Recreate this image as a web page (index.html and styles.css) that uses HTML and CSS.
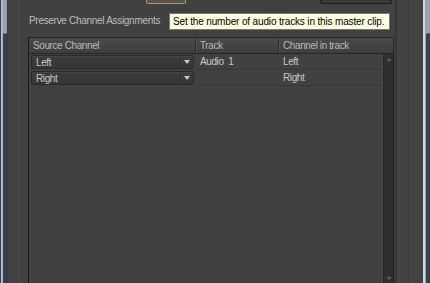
FILE: index.html
```html
<!DOCTYPE html>
<html lang="en">
<head>
    <meta charset="UTF-8">
    <title>Master Clip Channels</title>
    <link rel="stylesheet" href="styles.css">
</head>
<body>
    <div class="window">
        <div class="edge edge-left"></div>
        <div class="gutter gutter-left"></div>

        <div class="panel">
            <div class="top-buttons">
                <div class="btn btn-focus"></div>
                <div class="btn btn-dark"></div>
            </div>

            <div class="label-row">
                <span class="label">Preserve Channel Assignments</span>
                <div class="tooltip">Set the number of audio tracks in this master clip.</div>
            </div>

            <div class="grid">
                <div class="grid-head">
                    <div class="th col-src">Source Channel</div>
                    <div class="th col-track">Track</div>
                    <div class="th col-chan">Channel in track</div>
                </div>
                <div class="grid-body">
                    <div class="rows">
                        <div class="row">
                            <div class="cell col-src">
                                <div class="select"><span>Left</span><span class="arrow"></span></div>
                            </div>
                            <div class="cell col-track">Audio&nbsp; 1</div>
                            <div class="cell col-chan">Left</div>
                        </div>
                        <div class="row">
                            <div class="cell col-src">
                                <div class="select"><span>Right</span><span class="arrow"></span></div>
                            </div>
                            <div class="cell col-track"></div>
                            <div class="cell col-chan">Right</div>
                        </div>
                    </div>
                    <div class="scrollbar">
                        <span class="sb-up"></span>
                        <span class="sb-down"></span>
                    </div>
                </div>
            </div>
        </div>

        <div class="gutter gutter-right"></div>
        <div class="edge edge-right"></div>
    </div>
</body>
</html>
```

FILE: styles.css
```css
* {
    box-sizing: border-box;
    margin: 0;
    padding: 0;
}

body {
    background: #404040;
    font-family: 'Liberation Sans', Arial, sans-serif;
    font-size: 10px;
    color: #c4c4c4;
    overflow: hidden;
}

.window {
    display: flex;
    width: 430px;
    height: 283px;
}

/* outer frame strips */
.edge {
    width: 7px;
    background: linear-gradient(to bottom, #9aa2ab 0, #9aa2ab 33px, #37404c 34px, #37404c 100%);
}

.edge-left {
    border-left: 1px solid #3a3f46;
    box-shadow: inset 1px 0 0 #b6c0cb, inset 2px 0 0 #aab4bf;
}

.edge-right {
    box-shadow: inset 2px 0 0 #d0d6dc, inset 3px 0 0 #98a2ac;
}

.gutter-left {
    width: 13px;
    background: #434343;
    border-left: 1px solid #383838;
    border-right: 1px solid #4b4b4b;
}

.gutter-right {
    width: 28px;
    background: #434343;
    border-left: 2px solid #363636;
    box-shadow: inset -14px 0 0 #434343, inset -15px 0 0 #3b3b3b;
}

.panel {
    width: 375px;
    background: #414141;
    padding-left: 8px;
    display: flex;
    flex-direction: column;
}

/* buttons cut off at the top */
.top-buttons {
    display: flex;
    height: 4px;
}

.btn {
    height: 4px;
    border-radius: 0 0 2px 2px;
}

.btn-focus {
    margin-left: 118px;
    width: 40px;
    background: #5a5448;
    border: 1px solid #a8977a;
    border-top: none;
}

.btn-dark {
    margin-left: 134px;
    width: 72px;
    background: #383838;
    border: 1px solid #1e1e1e;
    border-top: none;
}

.label-row {
    position: relative;
    height: 33px;
    padding-top: 11px;
    padding-left: 1px;
}

.label {
    color: #bdbdbd;
    letter-spacing: -0.3px;
}

.tooltip {
    position: absolute;
    left: 141px;
    top: 9px;
    width: 221px;
    height: 17px;
    padding: 2px 0 0 3px;
    background: #ffffe1;
    border: 1px solid #7a7a6e;
    color: #000;
    white-space: nowrap;
    font-size: 10px;
    letter-spacing: -0.15px;
}

/* channel table */
.grid {
    flex: 1;
    display: flex;
    flex-direction: column;
    width: 366px;
    border-top: 1px solid #262626;
    border-left: 1px solid #1a1a1a;
    letter-spacing: -0.4px;
}

.grid-head {
    display: flex;
    height: 16px;
    background: linear-gradient(to bottom, #4a4a4a, #3e3e3e);
    border-bottom: 1px solid #262626;
    border-right: 1px solid #2a2a2a;
}

.th {
    padding: 2px 0 0 4px;
    color: #b8b8b8;
    white-space: nowrap;
}

.col-src {
    width: 167px;
}

.col-track {
    width: 83px;
}

.col-chan {
    flex: 1;
}

.grid-head .col-src,
.grid-head .col-track {
    border-right: 1px solid #2e2e2e;
    box-shadow: 1px 0 0 #505050;
}

.grid-body {
    flex: 1;
    display: flex;
}

.rows {
    flex: 1;
}

.row {
    display: flex;
    height: 16px;
}

.cell {
    padding: 2px 0 0 4px;
    color: #c8c8c8;
}

.row .col-track,
.row .col-chan {
    border-bottom: 1px solid #383838;
}

.row .col-src {
    padding: 1px 2px 0 2px;
}

.select {
    display: flex;
    justify-content: space-between;
    align-items: center;
    height: 14px;
    padding-left: 4px;
    background: linear-gradient(to bottom, #3c3c3c, #363636);
    border: 1px solid #2a2a2a;
    box-shadow: inset 0 1px 0 #464646;
    border-radius: 2px;
    color: #c8c8c8;
}

.arrow {
    width: 13px;
    height: 12px;
    border-left: 1px solid #2c2c2c;
    box-shadow: inset 1px 0 0 #474747;
    position: relative;
}

.arrow::after {
    content: '';
    position: absolute;
    left: 3px;
    top: 4px;
    border-left: 3px solid transparent;
    border-right: 3px solid transparent;
    border-top: 4px solid #c8c8c8;
}

.scrollbar {
    position: relative;
    width: 11px;
    background: #2e2e2e;
    border-left: 1px solid #262626;
    box-shadow: -1px 0 0 #484848, inset -1px 0 0 #1e1e1e;
}

.sb-up,
.sb-down {
    position: absolute;
    left: 2px;
    border-left: 3px solid transparent;
    border-right: 3px solid transparent;
}

.sb-up {
    top: 4px;
    border-bottom: 3px solid #5a5a5a;
}

.sb-down {
    bottom: 3px;
    border-top: 3px solid #5a5a5a;
}
```
